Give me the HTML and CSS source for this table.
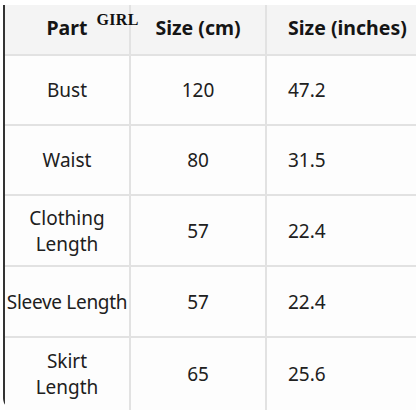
FILE: index.html
```html
<!DOCTYPE html>
<html>
<head>
<meta charset="utf-8">
<link rel="stylesheet" href="styles.css">
</head>
<body>
<div class="chart">
  <div class="cell head first"><span class="part">Part<span class="tag">GIRL</span></span></div>
  <div class="cell head center">Size (cm)</div>
  <div class="cell head left">Size (inches)</div>

  <div class="cell first">Bust</div>
  <div class="cell center">120</div>
  <div class="cell left">47.2</div>

  <div class="cell first">Waist</div>
  <div class="cell center">80</div>
  <div class="cell left">31.5</div>

  <div class="cell first">Clothing<br>Length</div>
  <div class="cell center">57</div>
  <div class="cell left">22.4</div>

  <div class="cell first single">Sleeve Length</div>
  <div class="cell center">57</div>
  <div class="cell left">22.4</div>

  <div class="cell first last">Skirt<br>Length</div>
  <div class="cell center last">65</div>
  <div class="cell left last">25.6</div>
</div>
</body>
</html>
```
FILE: styles.css
```css
html, body {
  margin: 0;
  padding: 0;
  background: #ffffff;
}
body {
  font-family: "Noto Sans", "Open Sans", sans-serif;
  color: #202020;
  width: 416px;
  height: 416px;
  overflow: hidden;
}
.chart {
  margin: 5px 0 0 3px;
  display: grid;
  grid-template-columns: 126px 136px 1fr;
  grid-template-rows: 51px 70px 70px 71px 71px 72px;
  border-left: 2px solid #333333;
  border-bottom: 2px solid transparent;
  border-bottom-left-radius: 12px;
  height: 405px;
  box-sizing: border-box;
}
.cell {
  display: flex;
  align-items: center;
  font-size: 19px;
  line-height: 26px;
  border-bottom: 2px solid #e2e2e2;
  border-right: 2px solid #e2e2e2;
  box-sizing: border-box;
  background: #fdfdfd;
}
.cell.last {
  border-bottom: none;
}
.cell.left {
  border-right: none;
  padding-left: 21px;
}
.first, .center {
  justify-content: center;
  text-align: center;
}
.single {
  white-space: nowrap;
  letter-spacing: -0.3px;
}
.head {
  background: #f4f4f4;
  font-weight: 700;
  font-size: 19.5px;
  color: #151515;
  padding-bottom: 4px;
}
.part {
  position: relative;
}
.tag {
  position: absolute;
  left: 50px;
  top: -8px;
  font-family: "Liberation Serif", serif;
  font-size: 16px;
  font-weight: 700;
  color: #111;
  letter-spacing: 0.3px;
}
```
